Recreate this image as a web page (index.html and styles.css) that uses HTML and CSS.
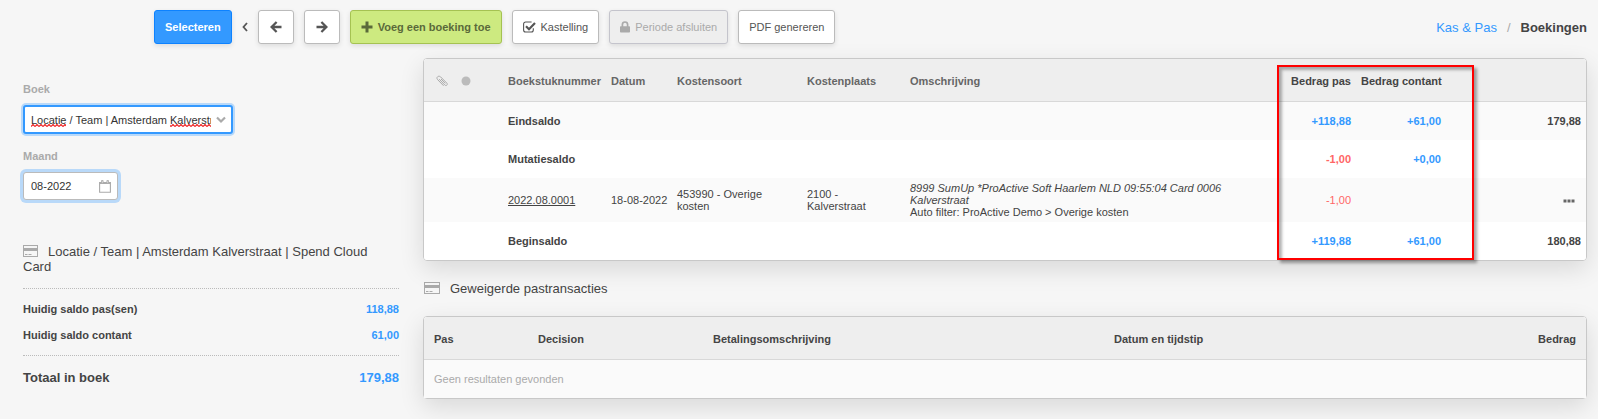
FILE: index.html
```html
<!DOCTYPE html>
<html lang="nl">
<head>
  <meta charset="UTF-8" />
  <meta name="viewport" content="width=device-width, initial-scale=1.0"/>
  <title>Kas &amp; Pas / Boekingen</title>
  <link rel="stylesheet" href="styles.css">
</head>
<body>

  <header class="topbar">
    <div class="actions">
      <button type="button" class="btn btn-primary">Selecteren</button>
      <svg class="collapse" width="6" height="10" viewBox="0 0 6 10"><path d="M5 1 L1.5 5 L5 9" fill="none" stroke="#555" stroke-width="1.8"/></svg>
      <button type="button" class="btn btn-icon" aria-label="Vorige">
        <svg width="12" height="12" viewBox="0 0 12 12"><path d="M11.5 6 H2 M6.6 1 L1.6 6 L6.6 11" fill="none" stroke="#555" stroke-width="2.3"/></svg>
      </button>
      <button type="button" class="btn btn-icon" aria-label="Volgende">
        <svg width="12" height="12" viewBox="0 0 12 12"><path d="M0.5 6 H10 M5.4 1 L10.4 6 L5.4 11" fill="none" stroke="#555" stroke-width="2.3"/></svg>
      </button>
      <button type="button" class="btn btn-add">
        <svg width="12" height="12" viewBox="0 0 12 12"><path d="M4.5 0.5 h3 v4 h4 v3 h-4 v4 h-3 v-4 h-4 v-3 h4 z" fill="#5a693a"/></svg>
        Voeg een boeking toe
      </button>
      <button type="button" class="btn">
        <svg width="13" height="12" viewBox="0 0 13 12"><path d="M10.3 7.2 V9 a2 2 0 0 1 -2 2 H2.6 a2 2 0 0 1 -2 -2 V3 a2 2 0 0 1 2 -2 H8.6" fill="none" stroke="#555" stroke-width="1.1"/><path d="M3 5.2 L6 8.2 L12 2" fill="none" stroke="#555" stroke-width="2.2"/></svg>
        Kastelling
      </button>
      <button type="button" class="btn" disabled>
        <svg width="10" height="12" viewBox="0 0 10 12"><path d="M2.4 6 V3.6 a2.6 2.6 0 0 1 5.2 0 V6" fill="none" stroke="#aaa" stroke-width="1.7"/><rect y="5.3" width="10" height="6.2" rx="0.8" fill="#aaa"/></svg>
        Periode afsluiten
      </button>
      <button type="button" class="btn">PDF genereren</button>
    </div>
    <nav class="breadcrumb">
      <a href="#">Kas &amp; Pas</a>
      <span class="divider">/</span>
      <span class="current">Boekingen</span>
    </nav>
  </header>

  <div class="layout">
    <aside class="sidebar">
      <label for="boek">Boek</label>
      <div class="field field-book">
        <input type="text" id="boek" role="combobox" value="Locatie / Team | Amsterdam Kalverstraat" />
        <svg class="spelling" width="180" height="3" viewBox="0 0 180 3">
          <defs><pattern id="wave" width="4" height="3" patternUnits="userSpaceOnUse"><path d="M0 2.5 L2 0.5 L4 2.5" fill="none" stroke="#e22" stroke-width="1.2"/></pattern></defs>
          <rect width="35" height="3" fill="url(#wave)"/>
          <rect x="139" width="41" height="3" fill="url(#wave)"/>
        </svg>
        <svg class="field-icon" width="10" height="8" viewBox="0 0 10 8"><path d="M1 1.5 L5 5.5 L9 1.5" fill="none" stroke="#aaa" stroke-width="2.2"/></svg>
      </div>
      <label for="maand">Maand</label>
      <div class="field field-month">
        <input type="text" id="maand" value="08-2022" />
        <svg class="field-icon" width="12" height="13" viewBox="0 0 12 13"><path d="M0.6 2.5 H11.4 V12.3 H0.6 Z" fill="none" stroke="#aaa" stroke-width="1.1"/><path d="M0.5 2 h11 v2 h-11 z" fill="#aaa"/><path d="M2.5 0.5 h1.6 v3 h-1.6 z M7.9 0.5 h1.6 v3 h-1.6 z" fill="#ddd" stroke="#aaa" stroke-width="0.8"/></svg>
      </div>

      <h2 class="title">
        <svg class="card" width="15" height="12" viewBox="0 0 15 12"><rect x="0.5" y="0.5" width="14" height="11" fill="none" stroke="#aaa"/><path d="M0 3 h15 v3 h-15 z M2 9 h2.5 v1 h-2.5 z M5.5 9 h3 v1 h-3 z" fill="#aaa"/></svg>Locatie / Team | Amsterdam Kalverstraat | Spend Cloud Card
      </h2>
      <dl class="balances">
        <div><dt>Huidig saldo pas(sen)</dt><dd>118,88</dd></div>
        <div><dt>Huidig saldo contant</dt><dd>61,00</dd></div>
      </dl>
      <dl class="total">
        <div><dt>Totaal in boek</dt><dd>179,88</dd></div>
      </dl>
    </aside>

    <main class="content">
      <div class="panel">
        <table class="bookings">
          <colgroup>
            <col class="c-clip"><col class="c-status"><col class="c-number"><col class="c-date"><col class="c-type"><col class="c-place"><col><col class="c-card"><col class="c-cash"><col class="c-total">
          </colgroup>
          <thead>
            <tr>
              <th class="clip"><svg width="13" height="13" viewBox="0 0 13 13"><path d="M3.2 4.2 L8.8 10 c1.5 1.4 3.4 -0.4 2 -1.9 L4.6 1.9 C2.5 0 -0.3 2.5 1.6 4.6 L7.6 10.8 M5 4 L9.3 8.4" fill="none" stroke="#aaa" stroke-width="1"/></svg></th>
              <th><svg width="10" height="10" viewBox="0 0 10 10"><circle cx="5" cy="5" r="4.5" fill="#bbb"/></svg></th>
              <th>Boekstuknummer</th>
              <th>Datum</th>
              <th>Kostensoort</th>
              <th>Kostenplaats</th>
              <th>Omschrijving</th>
              <th class="num">Bedrag pas</th>
              <th class="num">Bedrag contant</th>
              <th></th>
            </tr>
          </thead>
          <tbody>
            <tr class="saldo">
              <td></td><td></td>
              <td>Eindsaldo</td>
              <td></td><td></td><td></td><td></td>
              <td class="num plus">+118,88</td>
              <td class="num plus">+61,00</td>
              <td class="num">179,88</td>
            </tr>
            <tr class="saldo">
              <td></td><td></td>
              <td>Mutatiesaldo</td>
              <td></td><td></td><td></td><td></td>
              <td class="num minus">-1,00</td>
              <td class="num plus">+0,00</td>
              <td></td>
            </tr>
            <tr class="booking">
              <td></td><td></td>
              <td><a href="#">2022.08.0001</a></td>
              <td class="date">18-08-2022</td>
              <td>453990 - Overige kosten</td>
              <td class="place">2100 - Kalverstraat</td>
              <td><em>8999 SumUp *ProActive Soft Haarlem NLD 09:55:04 Card 0006 Kalverstraat</em><br>Auto filter: ProActive Demo &gt; Overige kosten</td>
              <td class="num minus">-1,00</td>
              <td></td>
              <td class="num">
                <button type="button" class="more" aria-label="Meer"><svg width="12" height="4" viewBox="0 0 12 4"><path d="M0.5 0.5 h3 v3 h-3 z M4.5 0.5 h3 v3 h-3 z M8.5 0.5 h3 v3 h-3 z" fill="#666"/></svg></button>
              </td>
            </tr>
            <tr class="saldo">
              <td></td><td></td>
              <td>Beginsaldo</td>
              <td></td><td></td><td></td><td></td>
              <td class="num plus">+119,88</td>
              <td class="num plus">+61,00</td>
              <td class="num">180,88</td>
            </tr>
          </tbody>
        </table>
        <div class="highlight"></div>
      </div>

      <h2 class="title">
        <svg class="card" width="16" height="12" viewBox="0 0 16 12"><rect x="0.5" y="0.5" width="15" height="11" fill="none" stroke="#aaa"/><path d="M0 3 h16 v3 h-16 z M2 9 h2.5 v1 h-2.5 z M5.5 9 h3 v1 h-3 z" fill="#aaa"/></svg>Geweigerde pastransacties
      </h2>

      <div class="panel">
        <table class="refused">
          <colgroup><col class="c-pas"><col class="c-decision"><col class="c-payment"><col><col class="c-amount"></colgroup>
          <thead>
            <tr>
              <th>Pas</th>
              <th>Decision</th>
              <th>Betalingsomschrijving</th>
              <th>Datum en tijdstip</th>
              <th class="num">Bedrag</th>
            </tr>
          </thead>
          <tbody>
            <tr>
              <td colspan="5" class="empty">Geen resultaten gevonden</td>
            </tr>
          </tbody>
        </table>
      </div>
    </main>
  </div>

</body>
</html>
```
FILE: styles.css
```css
* {
  box-sizing: border-box;
}

body {
  margin: 0;
  min-height: 100vh;
  font-family: Arial, "Liberation Sans", sans-serif;
  font-size: 11px;
  line-height: 12px;
  color: #444;
  background: #f6f6f6;
}

a {
  color: #3399ff;
  text-decoration: none;
}

.topbar {
  display: flex;
  justify-content: space-between;
  align-items: center;
  padding: 10px 11px 14px 154px;
}

.actions {
  display: flex;
  align-items: center;
  gap: 10px;
}

.btn {
  display: flex;
  align-items: center;
  gap: 5px;
  height: 34px;
  padding: 0 10px;
  font-family: inherit;
  font-size: 11px;
  color: #555;
  background: #fff;
  border: 1px solid #bbb;
  border-radius: 3px;
  box-shadow: 0 2px 5px rgba(0, 0, 0, 0.1);
  cursor: pointer;
}

.btn-primary {
  font-weight: bold;
  color: #fff;
  background: #3399ff;
  border-color: #0d82ff;
}

.btn-icon {
  width: 36px;
  justify-content: center;
}

.btn-add {
  font-weight: bold;
  color: #5a693a;
  background: #cdea80;
  border-color: #a5c252;
}

.btn:disabled {
  color: #aaa;
  background: #eee;
  border-color: #c4c4cc;
  cursor: default;
}

.breadcrumb {
  display: flex;
  gap: 10px;
  font-size: 13px;
  line-height: 15px;
}

.breadcrumb .divider {
  color: #aaa;
}

.breadcrumb .current {
  font-weight: bold;
}

.layout {
  display: flex;
  gap: 24px;
  padding: 0 11px 20px 23px;
}

.sidebar {
  flex: 0 0 376px;
  padding-top: 24px;
}

.sidebar label {
  display: block;
  margin-bottom: 9px;
  line-height: 14px;
  font-weight: bold;
  color: #aaa;
}

.field {
  position: relative;
  margin-bottom: 15px;
}

.field input {
  display: block;
  width: 100%;
  height: 28px;
  padding: 0 24px 0 7px;
  font-family: inherit;
  font-size: 11px;
  color: #333;
  background: #fff;
  border: 1px solid #bbb;
  border-radius: 3px;
  outline: none;
  box-shadow: 0 0 0 3px #b9d9f9;
}

.field-book {
  width: 210px;
}

.field-book input {
  height: 29px;
  padding: 0 20px 0 6px;
  border: 2px solid #3399ff;
  box-shadow: 0 0 0 2px #b9d9f9;
}

.field-month {
  width: 95px;
  margin-bottom: 44px;
}

.field-icon {
  position: absolute;
  top: 0;
  bottom: 0;
  right: 7px;
  margin: auto 0;
}

.spelling {
  position: absolute;
  left: 8px;
  bottom: 7px;
}

.title {
  margin: 0;
  font-size: 13px;
  font-weight: normal;
  line-height: 15px;
}

.card {
  margin-right: 10px;
  vertical-align: -1px;
}

dl {
  margin: 0;
  border-top: 1px dotted #bbb;
  font-weight: bold;
  line-height: 14px;
}

dl div {
  display: flex;
  justify-content: space-between;
}

dd {
  margin: 0;
  color: #3399ff;
}

.balances {
  display: flex;
  flex-direction: column;
  gap: 12px;
  margin-top: 14px;
  padding: 13px 0;
}

.total {
  padding-top: 14px;
  font-size: 13px;
  line-height: 15px;
}

.content {
  flex: 1;
  min-width: 0;
}

.content .title {
  margin: 20px 1px;
}

.panel {
  position: relative;
  border: 1px solid #c8c8c8;
  border-radius: 4px;
  box-shadow: 0 8px 24px rgba(0, 0, 0, 0.12);
}

table {
  width: 100%;
  table-layout: fixed;
  border-collapse: separate;
  border-spacing: 0;
  background: #fff;
  border-radius: 3px;
}

th {
  height: 43px;
  padding: 2px 5px 0;
  text-align: left;
  background: #eee;
  border-bottom: 1px solid #d8d8d8;
}

th:first-child {
  border-top-left-radius: 3px;
}

th:last-child {
  border-top-right-radius: 3px;
}

th svg {
  display: block;
}

td {
  height: 38px;
  padding: 0 5px;
}

tbody tr:nth-child(odd) {
  background: #fafafa;
}

.bookings th {
  color: #666;
  white-space: nowrap;
}

.bookings th.num {
  color: #444;
}

.bookings .clip {
  padding-left: 12px;
}

.num {
  text-align: right;
}

.saldo td {
  font-weight: bold;
}

.booking td {
  height: 44px;
}

.booking a {
  color: #444;
  text-decoration: underline;
}

.booking .date {
  white-space: nowrap;
}

.booking .place {
  padding-right: 20px;
}

.bookings .plus {
  color: #3399ff;
}

.bookings .minus {
  color: #ff6666;
}

.more {
  padding: 4px 6px;
  background: none;
  border: none;
  cursor: pointer;
}

.more svg {
  display: block;
}

.c-clip { width: 32px; }
.c-status { width: 47px; }
.c-number { width: 103px; }
.c-date { width: 66px; }
.c-type { width: 130px; }
.c-place { width: 103px; }
.c-card { width: 80px; }
.c-cash { width: 90px; }
.c-total { width: 140px; }

.highlight {
  position: absolute;
  top: 6px;
  right: 112px;
  bottom: 0;
  width: 197px;
  border: 2px solid #f00;
  box-shadow: 3px 3px 3px rgba(0, 0, 0, 0.35), inset 3px 3px 3px rgba(0, 0, 0, 0.3);
  pointer-events: none;
}

.refused th {
  padding: 2px 10px 0;
}

.refused td {
  padding: 0 10px;
}

.refused .empty {
  color: #aaa;
}

.c-pas { width: 104px; }
.c-decision { width: 175px; }
.c-payment { width: 401px; }
.c-amount { width: 120px; }
```
